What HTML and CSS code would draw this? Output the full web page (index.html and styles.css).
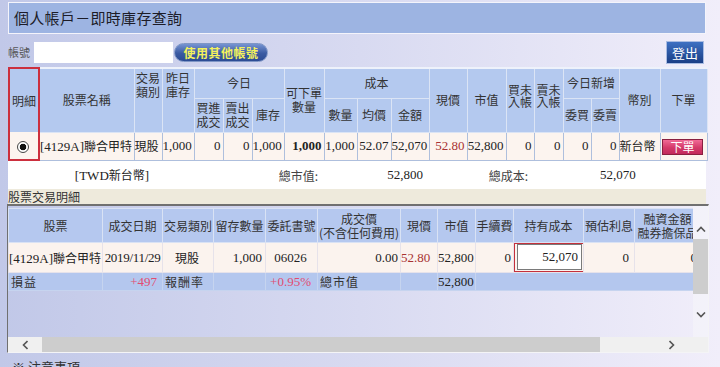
FILE: index.html
```html
<!DOCTYPE html>
<html lang="zh-Hant">
<head>
    <meta charset="UTF-8">
    <meta name="viewport" content="width=device-width, initial-scale=1.0">
    <title>個人帳戶－即時庫存查詢</title>
    <link rel="stylesheet" href="styles.css">
</head>
<body>
<div class="page">
    <div class="title-bar">個人帳戶－即時庫存查詢</div>

    <div class="account-row">
        <span class="account-label">帳號</span>
        <input class="account-input" type="text">
        <button class="btn-other">使用其他帳號</button>
        <button class="btn-logout">登出</button>
    </div>

    <table class="stock-table">
        <colgroup>
            <col style="width:30px"><col style="width:95px"><col style="width:28px"><col style="width:32px">
            <col style="width:29px"><col style="width:29px"><col style="width:32px"><col style="width:40px">
            <col style="width:33px"><col style="width:34px"><col style="width:38px"><col style="width:38px">
            <col style="width:39px"><col style="width:28px"><col style="width:29px"><col style="width:28px">
            <col style="width:28px"><col style="width:41px"><col style="width:47px">
        </colgroup>
        <tr class="head-top">
            <th rowspan="2" class="mark-head">明細</th>
            <th rowspan="2">股票名稱</th>
            <th rowspan="2" class="top">交易<br>類別</th>
            <th rowspan="2" class="top">昨日<br>庫存</th>
            <th colspan="3">今日</th>
            <th rowspan="2">可下單<br>數量</th>
            <th colspan="3">成本</th>
            <th rowspan="2">現價</th>
            <th rowspan="2">市值</th>
            <th rowspan="2" class="tight">買未<br>入帳</th>
            <th rowspan="2" class="tight">賣未<br>入帳</th>
            <th colspan="2">今日新增</th>
            <th rowspan="2">幣別</th>
            <th rowspan="2">下單</th>
        </tr>
        <tr class="head-sub">
            <th>買進<br>成交</th>
            <th>賣出<br>成交</th>
            <th>庫存</th>
            <th>數量</th>
            <th>均價</th>
            <th>金額</th>
            <th>委買</th>
            <th>委賣</th>
        </tr>
        <tr class="data-row">
            <td class="mark-cell center"><span class="radio"></span></td>
            <td class="left">[4129A]<span class="han">聯合甲特</span></td>
            <td class="left"><span class="han">現股</span></td>
            <td>1,000</td>
            <td>0</td>
            <td>0</td>
            <td>1,000</td>
            <td class="bold">1,000</td>
            <td>1,000</td>
            <td>52.07</td>
            <td>52,070</td>
            <td class="price">52.80</td>
            <td>52,800</td>
            <td>0</td>
            <td>0</td>
            <td>0</td>
            <td>0</td>
            <td class="left"><span class="han">新台幣</span></td>
            <td class="center"><button class="btn-order">下單</button></td>
        </tr>
    </table>

    <div class="totals-row">
        <span class="tot-currency">[TWD<span class="han">新台幣</span>]</span>
        <span class="tot-label">總市值:</span>
        <span class="tot-value">52,800</span>
        <span class="tot-label">總成本:</span>
        <span class="tot-cost">52,070</span>
    </div>

    <div class="section-label">股票交易明細</div>

    <div class="detail-frame">
        <div class="frame-view">
            <table class="detail-table">
                <colgroup>
                    <col style="width:94px"><col style="width:60px"><col style="width:51px"><col style="width:52px">
                    <col style="width:52px"><col style="width:83px"><col style="width:37px"><col style="width:38px">
                    <col style="width:38px"><col style="width:70px"><col style="width:51px"><col style="width:66px">
                    <col style="width:60px">
                </colgroup>
                <tr class="d-head">
                    <th>股票</th>
                    <th>成交日期</th>
                    <th>交易類別</th>
                    <th>留存數量</th>
                    <th>委託書號</th>
                    <th>成交價<br>(不含任何費用)</th>
                    <th>現價</th>
                    <th>市值</th>
                    <th>手續費</th>
                    <th>持有成本</th>
                    <th>預估利息</th>
                    <th>融資金額<br>融券擔保品</th>
                    <th>融券<br>手續費</th>
                </tr>
                <tr class="d-row">
                    <td class="left">[4129A]<span class="han">聯合甲特</span></td>
                    <td class="center date">2019/11/29</td>
                    <td class="center"><span class="han">現股</span></td>
                    <td class="pad3">1,000</td>
                    <td class="center">06026</td>
                    <td>0.00</td>
                    <td class="price pad8">52.80</td>
                    <td class="pad3">52,800</td>
                    <td>0</td>
                    <td class="cost-cell">
                        <span class="cost-mark"><input class="cost-input" type="text" value="52,070"></span>
                    </td>
                    <td class="pad5">0</td>
                    <td class="pad3">0</td>
                    <td>0</td>
                </tr>
                <tr class="d-sum">
                    <td class="left cjk">損益</td>
                    <td class="gain pad5">+497</td>
                    <td class="left cjk">報酬率</td>
                    <td></td>
                    <td class="gain pad6">+0.95%</td>
                    <td class="left cjk">總市值</td>
                    <td></td>
                    <td class="pad3">52,800</td>
                    <td colspan="5"></td>
                </tr>
            </table>
        </div>

        <div class="vscroll">
            <div class="vs-up">
                <svg width="10" height="6" viewBox="0 0 10 6"><path d="M1 5.5 L5 1.5 L9 5.5" fill="none" stroke="#555" stroke-width="1.6"/></svg>
            </div>
            <div class="vs-thumb"></div>
            <div class="vs-track"></div>
            <div class="vs-down">
                <svg width="10" height="6" viewBox="0 0 10 6"><path d="M1 0.5 L5 4.5 L9 0.5" fill="none" stroke="#555" stroke-width="1.6"/></svg>
            </div>
            <div class="vs-end"></div>
        </div>

        <div class="hscroll">
            <div class="hs-left">
                <svg width="6" height="10" viewBox="0 0 6 10"><path d="M5.5 1 L1.5 5 L5.5 9" fill="none" stroke="#555" stroke-width="1.6"/></svg>
            </div>
            <div class="hs-thumb"></div>
            <div class="hs-track"></div>
            <div class="hs-right">
                <svg width="6" height="10" viewBox="0 0 6 10"><path d="M0.5 1 L4.5 5 L0.5 9" fill="none" stroke="#555" stroke-width="1.6"/></svg>
            </div>
            <div class="hs-end"></div>
        </div>
        <div class="corner"></div>
    </div>

    <div class="notice">※ 注意事項</div>
</div>
</body>
</html>
```

FILE: styles.css
```css
html {
    overflow: hidden;
}

body {
    margin: 0;
    min-height: 100vh;
    background: linear-gradient(to right, #c1c8e8, #d8daf1 50%, #f1eefa);
    font-family: "Liberation Serif", "Noto Sans CJK TC", serif;
    font-size: 13px;
    color: #222;
}

.page {
    width: 698px;
    margin-left: 8px;
    padding-top: 2px;
}

.title-bar {
    height: 30px;
    line-height: 30px;
    padding-left: 5px;
    border: 1px solid #f4f4fb;
    background: #9db4e2;
    font-family: "Noto Sans CJK TC", sans-serif;
    font-size: 15px;
    letter-spacing: 0.3px;
    color: #1c1c28;
}

.account-row {
    display: flex;
    align-items: center;
    height: 24px;
    margin-top: 6px;
}

.account-label {
    width: 26px;
    font-family: "Noto Sans CJK TC", sans-serif;
    font-size: 11px;
    color: #555;
}

.account-input {
    width: 139px;
    height: 21px;
    padding: 0;
    margin: 0;
    border: none;
    background: #fff;
}

.btn-other {
    width: 94px;
    height: 19px;
    margin-left: 1px;
    padding: 0;
    border: 1px solid #7f96c6;
    border-radius: 10px;
    background: linear-gradient(#7694d2, #3a5aa2 55%, #2c4c94);
    color: #f4f25c;
    font-family: "Noto Sans CJK TC", sans-serif;
    font-size: 12px;
    font-weight: bold;
    letter-spacing: 0.5px;
    line-height: 17px;
}

.btn-logout {
    width: 38px;
    height: 23px;
    margin-left: auto;
    margin-right: 2px;
    padding: 0;
    border: 1px solid #a9bce2;
    background: linear-gradient(#3d70c2, #1b3f86);
    color: #fff;
    font-family: "Noto Sans CJK TC", sans-serif;
    font-size: 13px;
    line-height: 21px;
}

.han {
    font-family: "Noto Sans CJK TC", sans-serif;
    font-size: 12px;
}

/* inventory table */
.stock-table {
    width: 698px;
    margin-top: 3px;
    table-layout: fixed;
    border-collapse: collapse;
    border-top: 2px solid #eef2fb;
}

.stock-table th {
    padding: 0;
    border: 1px solid #dbe4f5;
    background: #b4c9ef;
    font-family: "Noto Sans CJK TC", sans-serif;
    font-size: 12px;
    font-weight: normal;
    line-height: 14px;
    color: #333;
    white-space: nowrap;
}

.stock-table th.top {
    vertical-align: top;
    padding-top: 2px;
}

.stock-table th.tight {
    line-height: 12px;
    padding-bottom: 8px;
}

.head-top {
    height: 30px;
}

.head-sub {
    height: 34px;
}

.stock-table td {
    height: 27px;
    padding: 0 2px 0 0;
    border: 1px solid #aebfdd;
    background: #fcf4ef;
    text-align: right;
    white-space: nowrap;
}

.stock-table .mark-head {
    border: 2px solid #cc2f3e;
    border-bottom: none;
}

.stock-table .mark-cell {
    border: 2px solid #cc2f3e;
    border-top: none;
}

.left {
    text-align: left !important;
}

.center {
    text-align: center !important;
}

.bold {
    font-weight: bold;
}

.price {
    color: #a83232;
}

.radio {
    display: inline-block;
    width: 10px;
    height: 10px;
    border: 1px solid #444;
    border-radius: 50%;
    background: radial-gradient(circle, #111 0 3px, #fff 3.6px);
    vertical-align: middle;
}

.btn-order {
    width: 41px;
    height: 16px;
    padding: 0;
    border: 1px solid #8a1f40;
    background: linear-gradient(#f06a96, #d43a6a 55%, #c22a5c);
    color: #fff;
    font-family: "Noto Sans CJK TC", sans-serif;
    font-size: 12px;
    line-height: 14px;
    vertical-align: middle;
}

/* totals */
.totals-row {
    display: grid;
    grid-template-columns: 208px 104px 120px 90px 1fr;
    align-items: center;
    height: 28px;
    background: #fff;
}

.tot-currency {
    text-align: center;
}

.tot-label {
    text-align: right;
    padding-right: 2px;
    font-family: "Noto Sans CJK TC", sans-serif;
    font-size: 12px;
    color: #444;
}

.tot-value {
    text-align: right;
    padding-right: 17px;
}

.tot-cost {
    padding-left: 70px;
}

.section-label {
    height: 15px;
    line-height: 15px;
    background: #eeeadc;
    font-family: "Noto Sans CJK TC", sans-serif;
    font-size: 12px;
    color: #333;
}

/* detail frame */
.detail-frame {
    display: grid;
    grid-template-columns: 685px 15px;
    grid-template-rows: 131px 15px;
    width: 700px;
    margin-left: -1px;
    border-top: 2px solid #707070;
    border-left: 1px solid #707070;
    border-right: 1px solid #f4f4f6;
    border-bottom: 1px solid #f4f4f6;
}

.frame-view {
    overflow: hidden;
}

.detail-table {
    width: 752px;
    margin-top: 2px;
    table-layout: fixed;
    border-collapse: collapse;
}

.detail-table th {
    height: 33px;
    padding: 0;
    border: 1px solid #d9e2f4;
    background: #b5c8ef;
    font-family: "Noto Sans CJK TC", sans-serif;
    font-size: 12px;
    font-weight: normal;
    line-height: 14px;
    color: #333;
    white-space: nowrap;
}

.detail-table td {
    padding: 0 2px 0 0;
    text-align: right;
    white-space: nowrap;
}

.detail-table td.date {
    padding: 0;
    letter-spacing: -0.3px;
}

.d-row td {
    height: 29px;
    border: 1px solid #e6e2ea;
    background: #fbf3ee;
}

.d-sum td {
    height: 17px;
    border: 1px solid #c6d4ef;
    background: #b4c7ee;
}

.cjk {
    font-family: "Noto Sans CJK TC", sans-serif;
    font-size: 12px;
    letter-spacing: 1px;
    color: #333;
    padding-left: 2px !important;
}

.gain {
    color: #e24c70;
}

.pad3 {
    padding-right: 3px !important;
}

.pad5 {
    padding-right: 5px !important;
}

.pad6 {
    padding-right: 6px !important;
}

.pad8 {
    padding-right: 8px !important;
}

.detail-table td.cost-cell {
    padding: 0;
}

.cost-mark {
    display: block;
    width: 65px;
    margin: -1px 0 -1px -1px;
    padding: 0 6px 1px 2px;
    border: 2px solid #c4303c;
}

.cost-input {
    display: block;
    box-sizing: border-box;
    width: 65px;
    height: 26px;
    margin: 0;
    padding: 0 3px 0 0;
    border: 1px solid #7a7a7a;
    background: #fff;
    text-align: right;
    font-family: "Liberation Serif", serif;
    font-size: 13px;
    color: #222;
}

/* scrollbars of the frame */
.vscroll {
    display: flex;
    flex-direction: column;
    background: rgba(246, 246, 250, 0.55);
}

.vs-up {
    height: 33px;
    display: flex;
    justify-content: center;
    align-items: flex-end;
    padding-bottom: 7px;
    box-sizing: border-box;
}

.vs-thumb {
    height: 55px;
    background: #cdcdcd;
}

.vs-track {
    flex: 1;
}

.vs-down {
    height: 16px;
    display: flex;
    justify-content: center;
    align-items: center;
}

.vs-end {
    height: 14px;
}

.hscroll {
    display: flex;
    align-items: stretch;
    background: #f0f0f0;
}

.hs-left {
    width: 34px;
    display: flex;
    justify-content: center;
    align-items: center;
}

.hs-thumb {
    width: 558px;
    background: #cdcdcd;
}

.hs-track {
    flex: 1;
}

.hs-right {
    width: 16px;
    display: flex;
    justify-content: center;
    align-items: center;
}

.hs-end {
    width: 13px;
}

.corner {
    background: #f0f0f0;
}

.notice {
    margin-top: 4px;
    padding-left: 4px;
    font-family: "Noto Sans CJK TC", sans-serif;
    font-size: 13px;
    color: #333;
}
```
